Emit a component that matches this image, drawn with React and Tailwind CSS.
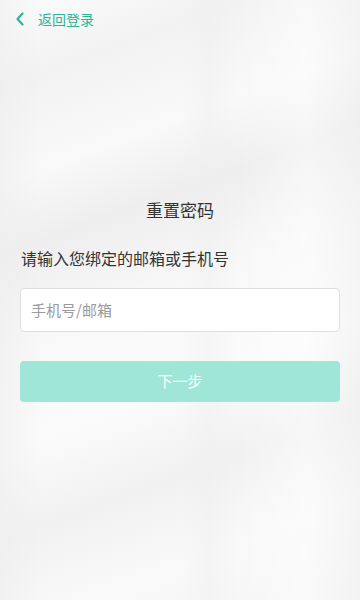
import React from "react";

const font = { fontFamily: '"Noto Sans CJK SC", "Noto Sans", sans-serif' };

function BackIcon() {
  return (
    <svg width="10" height="14" viewBox="0 0 10 14" fill="none">
      <path d="M7.5 1.5L2.5 7l5 5.5" stroke="#2bb597" strokeWidth="2.2" strokeLinecap="round" strokeLinejoin="round" />
    </svg>
  );
}

export default function App() {
  return (
    <div
      className="relative w-[360px] h-[600px] overflow-hidden bg-[#f7f7f7]"
      style={font}
    >
      {/* soft blurred window-light backdrop */}
      <div className="pointer-events-none absolute inset-0 bg-[linear-gradient(160deg,#fcfcfc_0%,#f2f2f2_12%,#f9f9f9_25%,#eeeeee_35%,#f8f8f8_48%,#fbfbfb_62%,#f1f1f1_74%,#f9f9f9_86%,#f5f5f5_100%)]" />
      <div className="pointer-events-none absolute inset-0 bg-[linear-gradient(90deg,rgba(238,238,238,0.6)_0%,rgba(255,255,255,0)_12%,rgba(255,255,255,0)_50%,rgba(238,238,238,0.4)_58%,rgba(255,255,255,0)_66%,rgba(255,255,255,0.4)_85%,rgba(240,240,240,0.5)_100%)]" />

      <div className="relative flex flex-col">
        <div className="flex items-center h-[38px] pl-[15px]">
          <BackIcon />
          <span className="ml-[13px] text-[14px] text-[#2bb597] leading-none">返回登录</span>
        </div>

        <div className="mt-[163px] text-center text-[17px] text-[#333] leading-none">重置密码</div>

        <div className="mt-[32px] px-[21px] text-[16px] text-[#333] leading-none">
          请输入您绑定的邮箱或手机号
        </div>

        <div className="mt-[22px] mx-[20px] h-[44px] bg-white border border-[#dedede] rounded-[4px] flex items-center px-[10px]">
          <input
            className="w-full outline-none bg-transparent text-[15px] text-[#333] placeholder:text-[#9a9a9a]"
            placeholder="手机号/邮箱"
            style={font}
          />
        </div>

        <button className="mt-[29px] mx-[20px] h-[41px] rounded-[4px] bg-[#a0e6d8] text-white text-[15px]" style={font}>
          下一步
        </button>
      </div>
    </div>
  );
}
